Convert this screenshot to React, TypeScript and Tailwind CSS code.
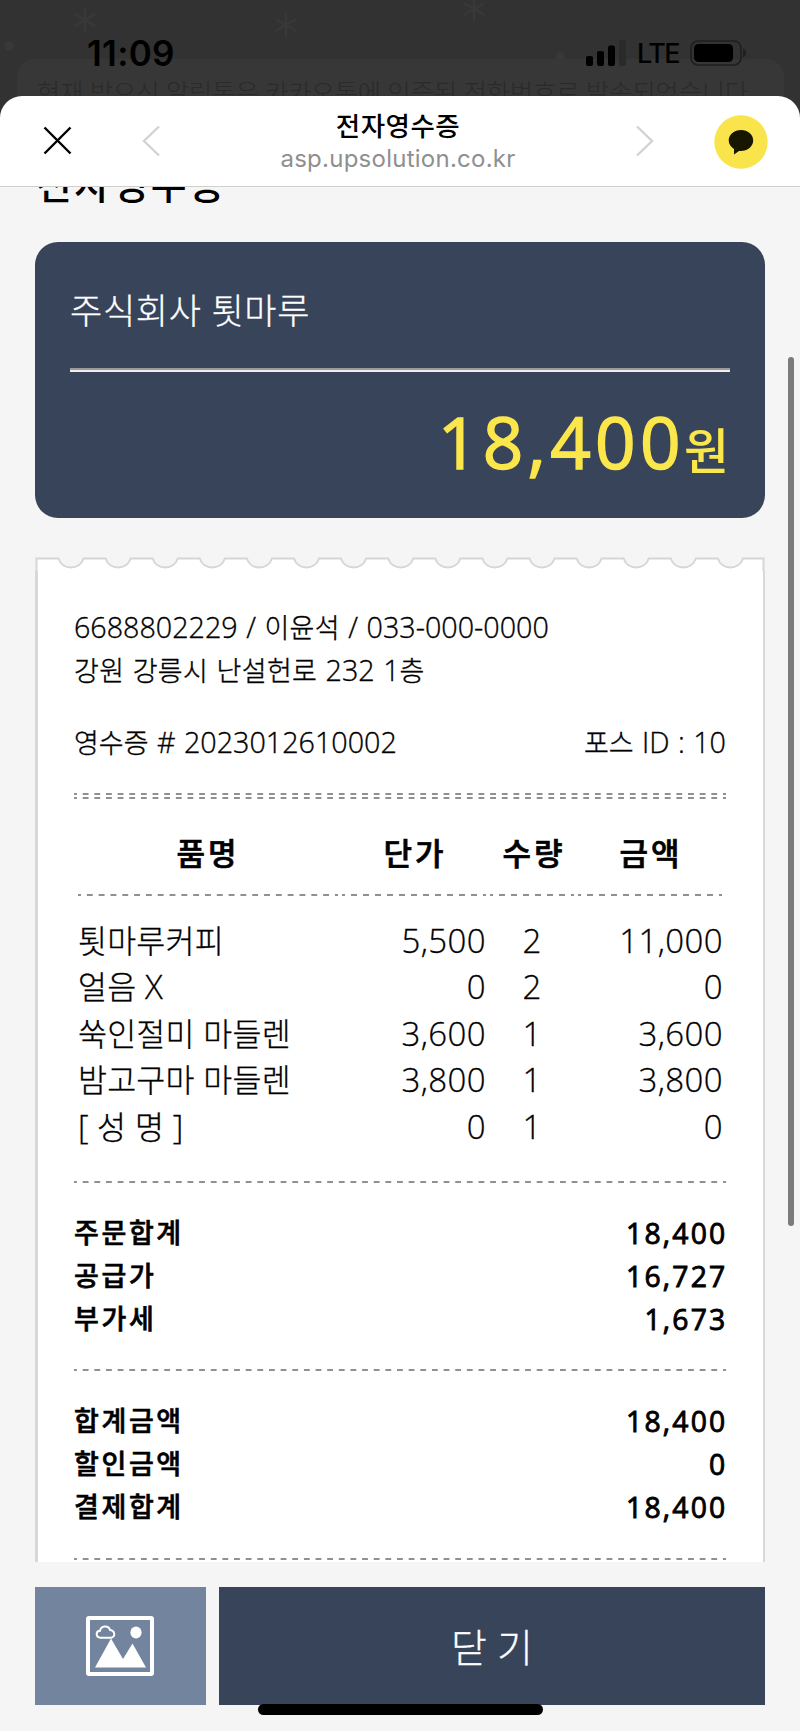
import React from 'react';

type TextProps = { children: string; ko?: string };

/** Renders Hangul runs and the remaining characters at separate sizes. */
function Mixed({ children, ko = '' }: TextProps) {
  return (
    <>
      {children.split(/([가-힣]+)/).map((part, i) =>
        i % 2 === 1 ? (
          <span key={i} className={ko}>
            {part}
          </span>
        ) : (
          part
        ),
      )}
    </>
  );
}

const DASH =
  'h-[2px] bg-[linear-gradient(90deg,#909090_0_3px,transparent_3px_8.66px,#909090_8.66px)] bg-[length:11.66px_2px] [background-repeat:round_no-repeat]';

function Dashes({ className = '' }: { className?: string }) {
  return <div className={`${DASH} ${className}`} />;
}

function Snowflake({ className }: { className: string }) {
  return (
    <svg viewBox="0 0 24 26" className={`absolute h-[26px] w-6 ${className}`} stroke="#383838" strokeWidth="2.600" strokeLinecap="round">
      <path d="M12 2V24M2.500 7.500L21.500 18.500M21.500 7.500L2.500 18.500" />
    </svg>
  );
}

function StatusBar() {
  return (
    <div className="relative h-[96px] overflow-hidden bg-[#323232]">
      <Snowflake className="left-[73px] top-[7px]" />
      <Snowflake className="left-[274px] top-[12px]" />
      <Snowflake className="left-[462px] top-[-4px]" />
      <div className="absolute left-1 top-[41px] size-[10px] rounded-full bg-[#383838]" />
      <div className="absolute left-[556px] top-[52px] size-[9px] rounded-full bg-[#383838]" />
      <div className="absolute left-[17px] top-[59px] h-14 w-[767px] rounded-[18px] bg-[#373737] pl-[20px] pt-[15px] text-[25.200px] leading-[36px] font-light whitespace-nowrap text-[#2a2a2a]">
        현재 받으신 알림톡은 카카오톡에 인증된 전화번호로 발송되었습니다
      </div>
      <div className="relative flex h-full items-start justify-between pl-[87px] pr-[53px] pt-[32px] text-black">
        <div className="font-[Inter] text-[35px] leading-[42px] font-semibold tracking-[0.3px]">11:09</div>
        <div className="flex items-center pt-[8px]">
          <svg viewBox="0 0 40 26" className="h-[26px] w-10">
            <rect x="0" y="16" width="7" height="10" rx="2" />
            <rect x="11" y="11" width="7" height="15" rx="2" />
            <rect x="22" y="5.500" width="7" height="20.500" rx="2" />
            <rect x="33" y="0" width="7" height="26" rx="2" fill="#2a2a2a" />
          </svg>
          <div className="ml-[11px] h-[26px] w-[43px] font-[Inter] text-[27px] leading-[28px] font-medium tracking-[-1.500px]">LTE</div>
          <svg viewBox="0 0 57 26" className="ml-[10px] h-[26px] w-[57px]">
            <rect x="1" y="1" width="50" height="24" rx="7" fill="none" stroke="#1f1f1f" strokeWidth="1.700" />
            <rect x="4" y="4" width="39" height="18" rx="4.500" />
            <path d="M53 8.500C57 10 57 16 53 17.500Z" fill="#1f1f1f" />
          </svg>
        </div>
      </div>
    </div>
  );
}

function BrowserHeader() {
  return (
    <header className="relative flex h-[90px] items-start rounded-t-[22px] bg-white pl-[43px] pr-[32px]">
      <svg viewBox="0 0 30 30" className="mt-[30px] size-[30px]" stroke="#000" strokeWidth="2.400">
        <path d="M1.500 1.500L27.500 27.500M27.500 1.500L1.500 27.500" />
      </svg>
      <svg viewBox="0 0 20 32" className="ml-[68px] mt-[29px] h-8 w-5" stroke="#d3d3d3" strokeWidth="2.400" fill="none">
        <path d="M18 1.500L3 16L18 30.500" />
      </svg>
      <div className="flex-1 text-center">
        <div className="pt-[10px] text-[26.500px] leading-[40px] font-medium tracking-[0.5px] text-black">전자영수증</div>
        <div className="mt-[-3px] font-[Inter] text-[24px] leading-[32px] tracking-[0.25px] text-[#8f8f8f]">asp.upsolution.co.kr</div>
      </div>
      <svg viewBox="0 0 20 32" className="mr-[59px] mt-[29px] h-8 w-5" stroke="#d3d3d3" strokeWidth="2.400" fill="none">
        <path d="M2 1.500L17 16L2 30.500" />
      </svg>
      <svg viewBox="0 0 54 54" className="mt-[18.500px] size-[54px]">
        <circle cx="27" cy="27" r="26.700" fill="#f9e44c" />
        <path d="M27 15C20.300 15 14.700 19.400 14.700 25.300C14.700 29 16.800 32.200 20 34V39.500L25 36C33 36.700 39.200 31.700 39.200 25.300C39.200 19.400 33.700 15 27 15Z" fill="#191600" />
      </svg>
    </header>
  );
}

function AmountCard() {
  return (
    <section className="mx-[35px] mt-[16px] h-[275.500px] rounded-[23px] bg-[#38445a] px-[35px] pt-[42px]">
      <div className="text-[35px] leading-[54px] font-light tracking-[0.7px] text-white [-webkit-text-stroke:0.3px]">주식회사 툇마루</div>
      <div className="mt-[30px] h-[4px] border-t-2 border-b-2 border-t-[#9a9a9a] border-b-[#eeeeee]" />
      <div className="mt-[20px] flex h-[100px] items-baseline justify-end pr-[1px] text-[#fbe74b]">
        <span className="text-[71px] leading-[100px] font-normal tracking-[4.300px] [-webkit-text-stroke:1.5px]">18,400</span>
        <span className="ml-[-1px] text-[49px] leading-[60px] font-medium">원</span>
      </div>
    </section>
  );
}

const NOTCHES = Array.from({ length: 15 }, (_, i) => 36 + i * 47.1);
const EDGE = `M1.500 14V1.500${NOTCHES.map((c) => `H${c - 12.5}C${c - 9} 13.500 ${c + 9} 13.500 ${c + 12.5} 1.500`).join('')}H728.500V14`;

const ITEMS = [
  ['툇마루커피', '5,500', '2', '11,000'],
  ['얼음 X', '0', '2', '0'],
  ['쑥인절미 마들렌', '3,600', '1', '3,600'],
  ['밤고구마 마들렌', '3,800', '1', '3,800'],
  ['[ 성 명 ]', '0', '1', '0'],
];

function Totals({ rows }: { rows: string[][] }) {
  return (
    <div className="pt-[29px] text-[28.300px] leading-[42.800px] font-normal tracking-[2.200px]">
      {rows.map(([label, value]) => (
        <div key={label} className="flex h-[42.800px] justify-between">
          <span className="text-[27px] font-medium tracking-[2.600px] [-webkit-text-stroke:0.6px]">{label}</span>
          <span className="mr-[-1.500px] [-webkit-text-stroke:0.9px]">{value}</span>
        </div>
      ))}
    </div>
  );
}

const INFO_KO = 'text-[27px] tracking-[0.3px]';

function Receipt() {
  return (
    <section className="mx-[35px] mt-[39px] h-[1005px] overflow-hidden text-black">
      <svg viewBox="0 0 730 14" className="block h-[14px] w-[730px]">
        <path d={EDGE} fill="#fff" stroke="#d6d6d6" strokeWidth="2" />
      </svg>
      <div className="h-[991px] border-r-2 border-l-[3px] border-[#d8d8d8] bg-white pl-[36px] pr-[37px]">
        <div className="pt-[35px] text-[28.700px] leading-[42.500px] font-light [-webkit-text-stroke:0.35px] [word-spacing:1px]">
          <div><Mixed ko={INFO_KO}>6688802229 / 이윤석 / 033-000-0000</Mixed></div>
          <div><Mixed ko={INFO_KO}>강원 강릉시 난설헌로 232 1층</Mixed></div>
          <div className="mt-[28px] flex justify-between">
            <div><Mixed ko="text-[27px]">영수증 # 2023012610002</Mixed></div>
            <div><Mixed ko="text-[27px]">포스 ID : 10</Mixed></div>
          </div>
        </div>
        <Dashes className="mt-[29px]" />
        <Dashes className="mt-[2px]" />

        <div className="grid h-[95px] grid-cols-[264px_150px_88px_146px] pt-[30px] text-center text-[31px] leading-[48px] font-medium tracking-[3px] [-webkit-text-stroke:0.7px]">
          <div className="pl-[4px]">품명</div>
          <div className="pl-[4px]">단가</div>
          <div className="pl-[4px]">수량</div>
          <div className="pl-[4px]">금액</div>
        </div>
        <div className="grid grid-cols-[260px_144px_84px_144px] gap-x-[4px] pl-[4px]">
          <Dashes />
          <Dashes />
          <Dashes />
          <Dashes />
        </div>
        <div className="h-[285px] pt-[22px]">
          {ITEMS.map(([name, price, qty, sum]) => (
            <div key={name} className="grid h-[46.400px] grid-cols-[264px_148px_88px_149px] text-[33px] leading-[46px] font-light [-webkit-text-stroke:0.3px]">
              <div className="pl-[4px] whitespace-nowrap"><Mixed ko="text-[31.500px] tracking-[0.2px]">{name}</Mixed></div>
              <div className="text-right tracking-[0.4px]">{price}</div>
              <div className="pl-[4px] text-center">{qty}</div>
              <div className="text-right tracking-[0.4px]">{sum}</div>
            </div>
          ))}
        </div>

        <Dashes />
        <Totals rows={[['주문합계', '18,400'], ['공급가', '16,727'], ['부가세', '1,673']]} />
        <Dashes className="mt-[29px]" />
        <Totals rows={[['합계금액', '18,400'], ['할인금액', '0'], ['결제합계', '18,400']]} />
        <Dashes className="mt-[29px]" />
      </div>
    </section>
  );
}

function Footer() {
  return (
    <footer className="relative flex h-[168px] gap-[13.500px] px-[35px] pt-[25px]">
      <div className="flex h-[118px] w-[170.500px] items-center justify-center bg-[#73849e]">
        <svg viewBox="0 0 68 60" className="h-[60px] w-[68px]">
          <rect x="2" y="2" width="64" height="56" rx="1" fill="none" stroke="#fff" strokeWidth="4" />
          <path d="M9 51.500L25 22.500L37 43L46.500 27.500L60 51.500Z" fill="#fff" />
          <ellipse cx="50" cy="16.500" rx="5.600" ry="6" fill="#fff" />
          <path d="M14.500 21.700C9.500 21.500 9.500 15 14 14.800C15 9.500 22.500 9 24 14C29 14.500 30 21 25 21.700Z" fill="none" stroke="#fff" strokeWidth="2" />
        </svg>
      </div>
      <div className="flex h-[118px] flex-1 items-center justify-center bg-[#38445a] pt-[3px] text-[39px] font-light text-white [-webkit-text-stroke:0.3px]">닫 기</div>
      <div className="absolute left-[258px] top-[142.500px] h-[10.500px] w-[285px] rounded-full bg-black" />
    </footer>
  );
}

export default function App() {
  return (
    <div className="relative h-[1731px] w-[800px] overflow-hidden bg-[#f5f5f5] font-['Open_Sans','Noto_Sans_CJK_KR',sans-serif]">
      <div className="bg-[#323232]">
        <StatusBar />
        <BrowserHeader />
      </div>
      <div className="flex h-[40px] items-end overflow-hidden border-t border-[#d0d0d0] pl-[36px]">
        <h1 className="mb-[18px] text-[39px] leading-[48px] font-medium tracking-[2.400px] text-black">전자영수증</h1>
      </div>
      <AmountCard />
      <Receipt />
      <Footer />
      <div className="absolute left-[788px] top-[357px] h-[869px] w-[6px] rounded-full bg-[#7b7b7b]" />
    </div>
  );
}
